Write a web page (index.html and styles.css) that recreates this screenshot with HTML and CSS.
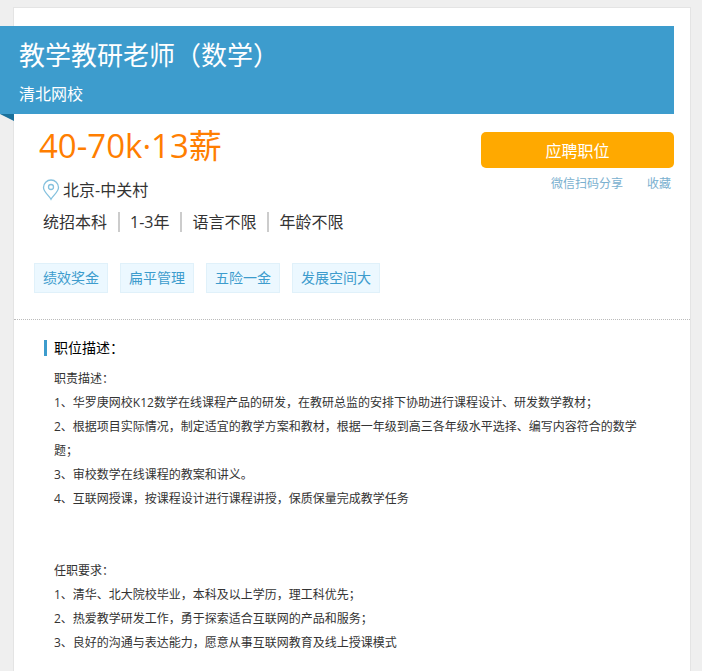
FILE: index.html
```html
<!DOCTYPE html>
<html lang="zh-CN">
<head>
    <meta charset="UTF-8">
    <meta name="viewport" content="width=device-width, initial-scale=1.0">
    <title>教学教研老师（数学） - 清北网校</title>
    <link rel="stylesheet" href="styles.css">
</head>
<body>
    <main class="job-card">
        <header class="banner">
            <h1 class="job-title">教学教研老师（数学）</h1>
            <p class="company">清北网校</p>
        </header>

        <section class="summary">
            <div class="info">
                <p class="salary">40-70k·13薪</p>
                <p class="location">
                    <svg class="pin" width="18" height="22" viewBox="0 0 18 22" aria-hidden="true">
                        <path d="M9 20.2C7.5 17 1.5 13 1.5 8.5a7.5 7.5 0 0 1 15 0C16.5 13 10.5 17 9 20.2z"/>
                        <circle cx="9" cy="8" r="2.5"/>
                    </svg>
                    <span>北京-中关村</span>
                </p>
                <ul class="requirements">
                    <li>统招本科</li>
                    <li>1-3年</li>
                    <li>语言不限</li>
                    <li>年龄不限</li>
                </ul>
            </div>
            <div class="actions">
                <button class="apply" type="button">应聘职位</button>
                <div class="links">
                    <a href="#share">微信扫码分享</a>
                    <a href="#favorite">收藏</a>
                </div>
            </div>
        </section>

        <ul class="tags">
            <li>绩效奖金</li>
            <li>扁平管理</li>
            <li>五险一金</li>
            <li>发展空间大</li>
        </ul>

        <section class="description">
            <h2>职位描述：</h2>
            <div class="text">
                <p>职责描述：</p>
                <p>1、华罗庚网校K12数学在线课程产品的研发，在教研总监的安排下协助进行课程设计、研发数学教材；</p>
                <p>2、根据项目实际情况，制定适宜的教学方案和教材，根据一年级到高三各年级水平选择、编写内容符合的数学题；</p>
                <p>3、审校数学在线课程的教案和讲义。</p>
                <p>4、互联网授课，按课程设计进行课程讲授，保质保量完成教学任务</p>
            </div>
            <div class="text">
                <p>任职要求：</p>
                <p>1、清华、北大院校毕业，本科及以上学历，理工科优先；</p>
                <p>2、热爱教学研发工作，勇于探索适合互联网的产品和服务；</p>
                <p>3、良好的沟通与表达能力，愿意从事互联网教育及线上授课模式</p>
            </div>
        </section>
    </main>
</body>
</html>
```
FILE: styles.css
```css
* {
    box-sizing: border-box;
}

body {
    margin: 0;
    padding: 7px 11px 0 13px;
    background: #efefef;
    color: #333;
    font-family: "Open Sans", "Noto Sans CJK SC", sans-serif;
    font-size: 12px;
}

h1, h2, p, ul {
    margin: 0;
    padding: 0;
    font-weight: normal;
}

ul {
    list-style: none;
}

a {
    color: #7ab0cf;
    text-decoration: none;
}

.job-card {
    min-height: calc(100vh - 7px);
    padding-top: 18px;
    border: 1px solid #e4e4e4;
    border-bottom: none;
    background: #fff;
}

.banner {
    position: relative;
    margin: 0 16px 0 -14px;
    padding: 9px 19px;
    background: #3d9ccd;
    color: #fff;
}

/* folded ribbon corner */
.banner::after {
    content: "";
    position: absolute;
    left: 0;
    top: 100%;
    border-top: 7px solid #1a719c;
    border-left: 14px solid transparent;
}

.job-title {
    font-size: 26px;
    line-height: 40px;
}

.company {
    margin-top: 8px;
    font-size: 16px;
    line-height: 22px;
}

.summary {
    display: flex;
    justify-content: space-between;
    padding: 8px 16px 0 25px;
}

.salary {
    color: #ff7e00;
    font-size: 33px;
    line-height: 48px;
}

.location {
    display: flex;
    align-items: center;
    gap: 3px;
    margin-top: 8px;
    padding-left: 3px;
    font-size: 16px;
    line-height: 24px;
}

.pin {
    fill: none;
    stroke: #84c1de;
    stroke-width: 1.3;
}

.requirements {
    display: flex;
    margin-top: 10px;
    padding-left: 4px;
    font-size: 16px;
    line-height: 20px;
}

.requirements li + li {
    margin-left: 11px;
    padding-left: 10px;
    border-left: 2px solid #ccc;
}

.actions {
    width: 193px;
    padding-top: 10px;
}

.apply {
    width: 100%;
    height: 36px;
    border: none;
    border-radius: 5px;
    background: #ffa900;
    color: #fff;
    font-family: inherit;
    font-size: 16px;
    cursor: pointer;
}

.links {
    display: flex;
    justify-content: flex-end;
    gap: 24px;
    margin-top: 7px;
    padding-right: 3px;
    line-height: 18px;
}

.tags {
    display: flex;
    gap: 12px;
    padding: 31px 20px 26px;
    border-bottom: 1px dotted #bbb;
}

.tags li {
    padding: 0 8px;
    border: 1px solid #e0f1fa;
    background: #ecf8ff;
    color: #3d9ccd;
    font-size: 14px;
    line-height: 28px;
}

.description {
    padding: 20px 40px 20px 30px;
}

.description h2 {
    padding-left: 7px;
    border-left: 3px solid #3d9ccd;
    color: #000;
    font-size: 14px;
    line-height: 16px;
}

.text {
    padding: 11px 0 0 10px;
    line-height: 24px;
}

.text + .text {
    padding-top: 48px;
}
```
